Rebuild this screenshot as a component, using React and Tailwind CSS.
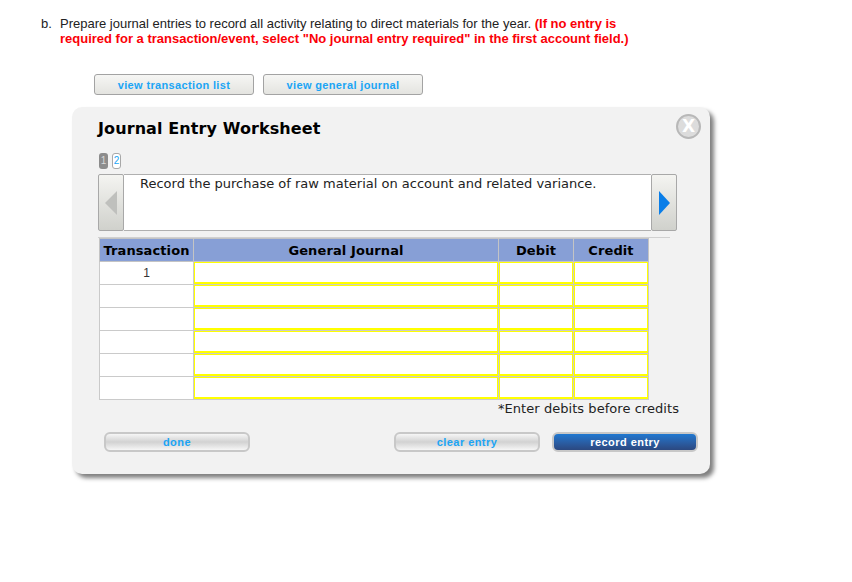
const rows = [0, 1, 2, 3, 4, 5];

function TopButton({ children }) {
  return (
    <button className="w-[160px] h-[21px] rounded-[3px] border border-[#a3a3a3] bg-gradient-to-b from-[#f6f6f4] to-[#e4e4e0] text-[11px] leading-[21px] font-bold tracking-[0.35px] text-[#1ba5f5] font-['Liberation_Sans',sans-serif]">
      {children}
    </button>
  );
}

function PillButton({ children, primary, className = "" }) {
  return (
    <button
      className={
        "w-[146px] h-[20px] shrink-0 rounded-[6px] border-2 text-[11px] font-bold tracking-[0.45px] leading-[15px] font-['Liberation_Sans',sans-serif] " +
        (primary
          ? "border-[#c8c8c8] bg-gradient-to-b from-[#1f78d0] to-[#2b4880] text-white "
          : "border-[#c8c8c8] bg-gradient-to-b from-[#f6f6f6] via-[#d2d2d2] to-[#f6f6f6] text-[#1ba5f5] ") +
        className
      }
    >
      {children}
    </button>
  );
}

function NavButton({ right }) {
  return (
    <div className="w-[26px] h-[57px] shrink-0 rounded-[2px] border border-[#a8a8a8] bg-gradient-to-b from-[#f4f4f1] to-[#d0d1cc] flex items-center justify-center">
      <svg width="13" height="24" viewBox="0 0 13 24">
        {right ? (
          <polygon points="1,0 12,12 1,24" fill="#0a7ee8" />
        ) : (
          <polygon points="12,0 0,12 12,24" fill="#bfc0bd" />
        )}
      </svg>
    </div>
  );
}

function InputCell() {
  return (
    <td className="border border-[#cacaca] p-0 align-top">
      <div className="h-[22px] border border-b-2 border-[#ffff00] bg-white" />
    </td>
  );
}

export default function App() {
  return (
    <div className="w-[852px] h-[582px] bg-white overflow-hidden pt-[16px] font-['DejaVu_Sans',sans-serif]">
      <div className="flex pl-[41px] text-[13px] leading-[15px] font-['Liberation_Sans',sans-serif] text-[#222]">
        <span className="w-[19px] shrink-0">b.</span>
        <p className="w-[600px]">
          Prepare journal entries to record all activity relating to direct materials for the year.{" "}
          <span className="font-bold text-[#fb0007]">
            (If no entry is
            <br />
            required for a transaction/event, select "No journal entry required" in the first account field.)
          </span>
        </p>
      </div>

      <div className="flex gap-[9px] ml-[94px] mt-[28px]">
        <TopButton>view transaction list</TopButton>
        <TopButton>view general journal</TopButton>
      </div>

      <div className="relative ml-[72px] mt-[12px] w-[638px] h-[367px] rounded-[10px] bg-[#f2f2f2] shadow-[4px_4px_4px_rgba(0,0,0,0.5)] px-[26px] pt-[11px]">
        <h1 className="text-[16px] leading-[22px] font-bold text-black tracking-[0.1px]">Journal Entry Worksheet</h1>

        <div className="absolute right-[9px] top-[7px] w-[25px] h-[25px] rounded-full border-2 border-[#b8b8b8] bg-[#dcdcdc] flex items-center justify-center text-[17px] font-bold text-white">
          X
        </div>

        <div className="flex gap-[4px] mt-[13px] ml-[1px] text-[10px] leading-[14px] font-['Liberation_Sans',sans-serif]">
          <span className="w-[9px] h-[16px] rounded-[3px] bg-[#8c8c8c] text-[#d8d8d8] text-center leading-[16px]">1</span>
          <span className="w-[9px] h-[16px] rounded-[3px] border border-[#a8a8a8] bg-white text-[#1ba5f5] text-center">2</span>
        </div>

        <div className="flex w-[579px] h-[57px] mt-[5px]">
          <NavButton />
          <div className="flex-1 bg-white border-y border-[#b0b0b0] pl-[16px] pt-[1px] text-[13px] leading-[16px] text-[#222]">
            Record the purchase of raw material on account and related variance.
          </div>
          <NavButton right />
        </div>

        <div className="w-[572px] mt-[6px] border-t border-[#d0d0d0]">
          <table className="border-collapse table-fixed w-[550px] ml-[1px] text-[13px]">
            <colgroup>
              <col className="w-[94px]" />
              <col className="w-[305px]" />
              <col className="w-[75px]" />
              <col className="w-[75px]" />
            </colgroup>
            <thead>
              <tr className="h-[23px] bg-[#879fd6] text-black">
                {["Transaction", "General Journal", "Debit", "Credit"].map((h) => (
                  <th key={h} className="border border-[#c4c4c4] p-0 pt-[1px] font-bold leading-[20px] tracking-[0.1px]">{h}</th>
                ))}
              </tr>
            </thead>
            <tbody>
              {rows.map((r) => (
                <tr key={r} className="h-[23px] bg-white">
                  <td className="border border-[#cacaca] p-0 text-center text-[12px] text-[#333] leading-[20px] font-['Liberation_Sans',sans-serif]">{r === 0 ? "1" : ""}</td>
                  <InputCell />
                  <InputCell />
                  <InputCell />
                </tr>
              ))}
            </tbody>
          </table>
        </div>

        <p className="ml-[400px] mt-[1px] text-[13px] leading-[16px] text-[#222] tracking-[0.05px] whitespace-nowrap">*Enter debits before credits</p>

        <div className="flex mt-[15px] ml-[6px]">
          <PillButton>done</PillButton>
          <PillButton className="ml-[144px]">clear entry</PillButton>
          <PillButton primary className="ml-[12px]">record entry</PillButton>
        </div>
      </div>
    </div>
  );
}
